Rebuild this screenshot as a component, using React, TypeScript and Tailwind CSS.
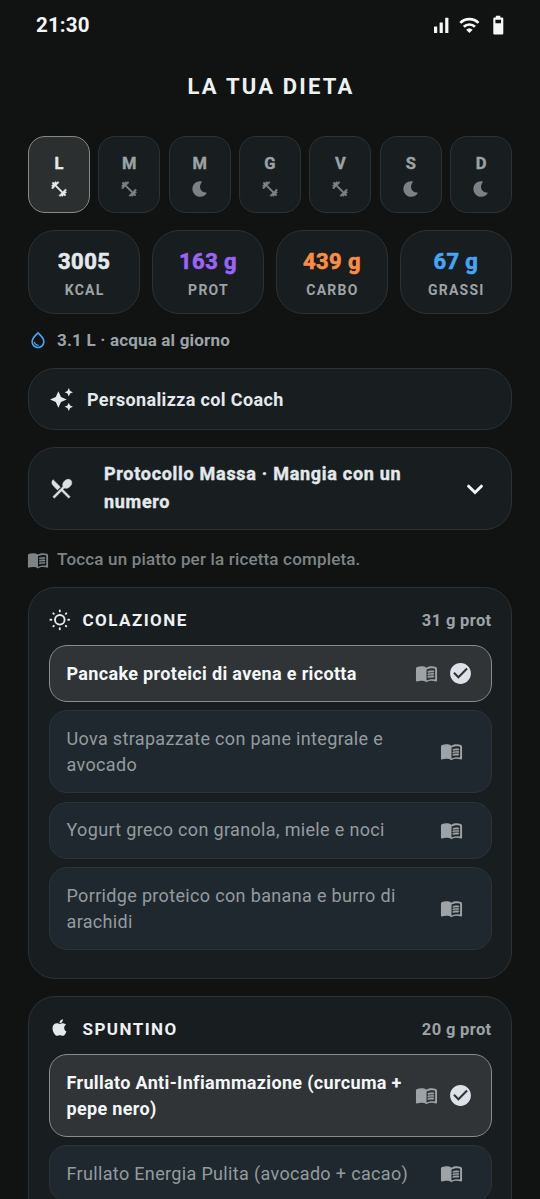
import React from "react";
import { MdOutlineWaterDrop, MdAutoAwesome, MdCheckCircle } from "react-icons/md";
import { FaApple } from "react-icons/fa";

function Book({ className = "" }: { className?: string }) {
  return (
    <svg viewBox="0 0 24 24" fill="currentColor" className={`shrink-0 ${className}`}>
      <path d="M17.5 4.5c-1.95 0-4.05.4-5.5 1.5-1.45-1.1-3.55-1.5-5.5-1.5-1.45 0-2.99.22-4.28.79C1.49 5.62 1 6.33 1 7.14v12.4c0 .6.6.95 1.2.75 1.2-.4 2.8-.65 4.3-.65 1.95 0 4.05.4 5.5 1.5 1.45-1.1 3.55-1.5 5.5-1.5 1.5 0 3.1.25 4.3.65.6.2 1.2-.15 1.2-.75V7.14c0-.81-.49-1.52-1.22-1.85-1.28-.57-2.82-.79-4.28-.79zM21 17.23c0 .63-.58 1.09-1.2.98-.75-.14-1.53-.2-2.3-.2-1.7 0-4.15.65-5.5 1.5V8c1.35-.85 3.8-1.5 5.5-1.5.92 0 1.83.09 2.7.28.46.1.8.51.8.98v9.47z" />
      <path
        stroke="currentColor"
        strokeWidth="0.5"
        d="M13.98 11.01c-.32 0-.61-.2-.71-.52-.13-.39.09-.82.48-.94 1.54-.5 3.53-.66 5.36-.45.41.05.71.42.66.83-.05.41-.42.71-.83.66-1.62-.19-3.39-.04-4.73.39-.08.01-.16.03-.23.03zM13.98 13.67c-.32 0-.61-.2-.71-.52-.13-.39.09-.82.48-.94 1.53-.5 3.53-.66 5.36-.45.41.05.71.42.66.83-.05.41-.42.71-.83.66-1.62-.19-3.39-.04-4.73.39-.08.02-.16.03-.23.03zM13.98 16.33c-.32 0-.61-.2-.71-.52-.13-.39.09-.82.48-.94 1.53-.5 3.53-.66 5.36-.45.41.05.71.42.66.83-.05.41-.42.7-.83.66-1.62-.19-3.39-.04-4.73.39-.08.02-.16.03-.23.03z"
      />
    </svg>
  );
}

function Barbell({ className = "" }: { className?: string }) {
  return (
    <svg viewBox="0 0 24 24" fill="currentColor" stroke="currentColor" strokeWidth="0.7" strokeLinejoin="round" className={className}>
      <path d="M20.57 14.86L22 13.43 20.57 12 17 15.57 8.43 7 12 3.43 10.57 2 9.14 3.43 7.71 2 5.57 4.14 4.14 2.71 2.71 4.14l1.43 1.43L2 7.71l1.43 1.43L2 10.57 3.43 12 7 8.43 15.57 17 12 20.57 13.43 22l1.43-1.43L16.29 22l2.14-2.14 1.43 1.43 1.43-1.43-1.43-1.43L22 16.29z" />
    </svg>
  );
}

function Cutlery() {
  return (
    <svg viewBox="0 0 24 24" fill="currentColor" stroke="currentColor" strokeWidth="0.5" strokeLinejoin="round" className="size-[25px] text-[#dce2e4]">
      <path d="M8.1 13.34l2.83-2.83L3.91 3.5a4.008 4.008 0 0 0 0 5.66l4.19 4.18zm6.78-1.81c1.53.71 3.68.21 5.27-1.38 1.91-1.91 2.28-4.65.81-6.12-1.46-1.46-4.2-1.1-6.12.81-1.59 1.59-2.09 3.74-1.38 5.27L3.7 19.87l1.41 1.41L12 14.41l6.88 6.88 1.41-1.41L13.41 13l1.47-1.47z" />
    </svg>
  );
}

function Sun() {
  return (
    <svg viewBox="0 0 22 22" fill="none" stroke="currentColor" strokeWidth="1.9" strokeLinecap="round" className="size-[22px]">
      <circle cx="10.8" cy="10.8" r="4.8" />
      <path d="M10.8 1.4v1M10.8 19.2v1M1.4 10.8h1M19.2 10.8h1M4.3 4.3l.5.5M16.8 16.8l.5.5M4.3 17.3l.5-.5M16.8 4.8l.5-.5" />
    </svg>
  );
}

function Moon({ className = "" }: { className?: string }) {
  return (
    <svg viewBox="0 0 18 18" fill="currentColor" className={className}>
      <path d="M9.2 1.2C4.8 1.2 1.4 4.6 1.4 8.9s3.5 7.8 7.8 7.8c2.7 0 4.8-1.1 6.2-3 .4-.6 0-1.2-.7-1.2-4.3-.1-7-4.7-5-8.6.3-.6.6-1 .9-1.4.5-.6.1-1.3-.6-1.3z" />
    </svg>
  );
}

const days = [
  { label: "L", train: true },
  { label: "M", train: true },
  { label: "M", train: false },
  { label: "G", train: true },
  { label: "V", train: true },
  { label: "S", train: false },
  { label: "D", train: false },
];

const stats = [
  { value: "3005", label: "KCAL", color: "text-[#e3e9ec]" },
  { value: "163 g", label: "PROT", color: "text-[#9b63f8]" },
  { value: "439 g", label: "CARBO", color: "text-[#fb8d43]" },
  { value: "67 g", label: "GRASSI", color: "text-[#47a5f5]" },
];

function Dish({ children, selected = false, tall = false }: { children: React.ReactNode; selected?: boolean; tall?: boolean }) {
  return (
    <div
      className={`flex items-center rounded-[18px] border pl-[17px] text-[18px] leading-[26.3px] ${tall ? "h-[83px]" : "h-[57px]"} ${
        selected
          ? "border-[#888c8f] bg-[#303437] pr-[17.5px] font-bold tracking-[0.34px] text-[#f4f7f8]"
          : "border-[#2c3439] bg-[#20282f] pr-[28px] text-[#949b9f] tracking-[0.34px]"
      }`}
    >
      <div className="flex-1 whitespace-nowrap pt-px">{children}</div>
      <Book className="size-[23px] text-[#9da3a6]" />
      {selected && <MdCheckCircle className="ml-[10.5px] size-[25px] shrink-0 text-[#dce2e7]" />}
    </div>
  );
}

function Meal({ icon, title, protein, children }: { icon: React.ReactNode; title: string; protein: string; children: React.ReactNode }) {
  return (
    <section className="rounded-[27px] border border-[#2b3235] bg-[#181d20] px-[19.5px] pb-7">
      <header className="flex h-[57px] items-center pt-[7px]">
        <div className="flex w-[22px] justify-center text-[#e3e9ec]">{icon}</div>
        <h2 className="ml-[12px] flex-1 pt-px text-[17px] font-bold tracking-[1.45px] text-[#edf1f2]">{title}</h2>
        <span className="pt-[2px] text-[16.5px] font-bold tracking-[0.35px] text-[#9ca3a6]">{protein}</span>
      </header>
      <div className="flex flex-col gap-[8.3px]">{children}</div>
    </section>
  );
}

export default function App() {
  return (
    <div className="h-[1199px] w-[540px] overflow-hidden bg-[#101312] font-['Roboto',sans-serif]">
      <div className="flex h-[50px] items-center pl-9 pr-[34.5px] text-[#f5f7f7]">
        <span className="flex-1 text-[20.5px] font-bold tracking-[0.15px]">21:30</span>
        <svg viewBox="0 0 72 20" fill="currentColor" className="h-5 w-[72px]">
          <rect x="0" y="11.5" width="3.2" height="6.5" rx=".5" />
          <rect x="5.6" y="7.5" width="3.2" height="10.5" rx=".5" />
          <rect x="11.2" y="2.8" width="3.2" height="15.2" rx=".5" />
          <g fill="none" stroke="currentColor" strokeWidth="2.7">
            <path d="M26.3 7.9a12.8 12.8 0 0 1 18.2 0M29.8 11.8a8 8 0 0 1 11.2 0" />
          </g>
          <path d="M32.1 14.7a4.9 4.9 0 0 1 6.6 0l-3.3 3.4z" />
          <path fillRule="evenodd" d="M61.8.8h4.5v1.6H68c.8 0 1.3.5 1.3 1.3V18.3c0 .8-.5 1.3-1.3 1.3h-7.4c-.8 0-1.3-.5-1.3-1.3V3.7c0-.8.5-1.3 1.3-1.3h1.2zM61.4 4.7v3.5h5.6V4.7z" />
        </svg>
      </div>
      <h1 className="flex h-[86px] items-center justify-center pb-[14px] pl-[2px] text-[22px] font-bold tracking-[2.2px] text-[#edf1f1]">LA TUA DIETA</h1>

      <main className="px-7">
        <div className="grid grid-cols-7 gap-[8.6px]">
          {days.map((d, i) => (
            <div
              key={i}
              className={`flex h-[77px] flex-col items-center rounded-[17px] border pt-[15px] ${
                i === 0 ? "border-[#858988] bg-[#2b2f2f]" : "border-[#2b3235] bg-[#181d20]"
              }`}
            >
              <span
                className={`text-[16.5px] font-bold leading-[24px] [-webkit-text-stroke:0.4px] ${i === 0 ? "text-[#e3e9ec]" : "text-[#9ca3a6]"}`}
              >
                {d.label}
              </span>
              {d.train ? (
                <Barbell className={`mt-[4px] size-[18px] ${i === 0 ? "text-[#e3e9ec]" : "text-[#7b8287]"}`} />
              ) : (
                <Moon className="mt-[4px] size-[18px] text-[#7b8287]" />
              )}
            </div>
          ))}
        </div>

        <div className="mt-[17px] grid grid-cols-4 gap-[11.6px]">
          {stats.map((s) => (
            <div key={s.label} className="flex h-[84px] flex-col items-center rounded-[27px] border border-[#2b3235] bg-[#181d20] pt-[15px]">
              <span className={`text-[22px] font-bold leading-[32px] tracking-[0.4px] [-webkit-text-stroke:0.6px] ${s.color}`}>{s.value}</span>
              <span className="mt-[2px] pl-px text-[14px] font-bold leading-[20px] tracking-[1.25px] text-[#9ca3a6]">{s.label}</span>
            </div>
          ))}
        </div>

        <div className="flex h-[54px] items-center">
          <MdOutlineWaterDrop className="-mt-[2px] size-5 text-[#47a5f5]" />
          <span className="ml-[9px] text-[17px] font-bold tracking-[0.18px] text-[#9ca3a6]">3.1 L · acqua al giorno</span>
        </div>

        <div className="flex h-[62px] items-center rounded-[27px] border border-[#2b3235] bg-[#181d20] pl-5">
          <MdAutoAwesome className="size-[25px] text-[#e3e9ec]" />
          <span className="ml-[13px] text-[18px] font-bold tracking-[0.36px] text-[#e3e9ec]">Personalizza col Coach</span>
        </div>

        <div className="mt-[17px] flex h-[83px] items-center rounded-[27px] border border-[#2b3235] bg-[#181d20] pl-5 pr-6">
          <Cutlery />
          <p className="ml-[30px] flex-1 pb-[2px] text-[18px] font-bold leading-[27.5px] tracking-[0.71px] text-[#e3e9ec] [-webkit-text-stroke:0.4px]">
            Protocollo Massa · Mangia con un
            <br />
            numero
          </p>
          <svg viewBox="0 0 24 24" fill="none" stroke="#f5f7f7" strokeWidth="3" strokeLinecap="round" className="size-6">
            <path d="M5.6 9.2l6.4 6.3 6.4-6.3" />
          </svg>
        </div>

        <div className="flex h-[59px] items-center text-[#7d8487]">
          <Book className="-ml-px size-[22px]" />
          <span className="ml-2 text-[17px] font-medium tracking-[0.17px]">Tocca un piatto per la ricetta completa.</span>
        </div>

        <div className="-mt-0.5">
          <Meal icon={<Sun />} title="COLAZIONE" protein="31 g prot">
            <Dish selected>Pancake proteici di avena e ricotta</Dish>
            <Dish tall>
              Uova strapazzate con pane integrale e
              <br />
              avocado
            </Dish>
            <Dish>Yogurt greco con granola, miele e noci</Dish>
            <Dish tall>
              Porridge proteico con banana e burro di
              <br />
              arachidi
            </Dish>
          </Meal>
        </div>

        <div className="mt-[17px]">
          <Meal icon={<FaApple className="-mt-0.5 size-[19px]" />} title="SPUNTINO" protein="20 g prot">
            <Dish selected tall>
              Frullato Anti-Infiammazione (curcuma +
              <br />
              pepe nero)
            </Dish>
            <Dish>Frullato Energia Pulita (avocado + cacao)</Dish>
          </Meal>
        </div>
      </main>
    </div>
  );
}
